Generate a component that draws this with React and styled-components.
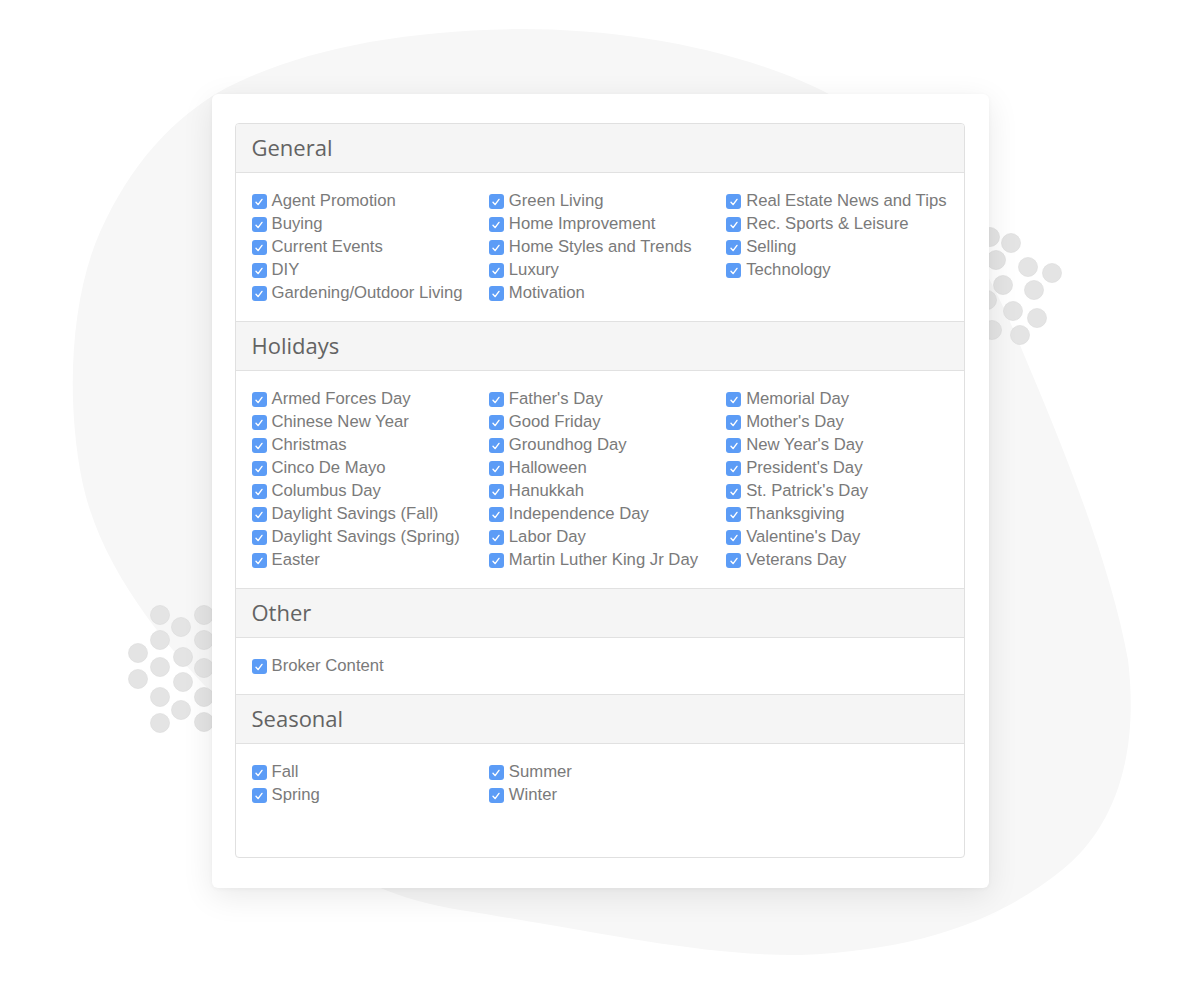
import React from "react"
import styled, { createGlobalStyle } from "styled-components"

const sections = [
  {
    title: "General",
    columns: [
      ["Agent Promotion", "Buying", "Current Events", "DIY", "Gardening/Outdoor Living"],
      ["Green Living", "Home Improvement", "Home Styles and Trends", "Luxury", "Motivation"],
      ["Real Estate News and Tips", "Rec. Sports & Leisure", "Selling", "Technology"],
    ],
  },
  {
    title: "Holidays",
    columns: [
      [
        "Armed Forces Day",
        "Chinese New Year",
        "Christmas",
        "Cinco De Mayo",
        "Columbus Day",
        "Daylight Savings (Fall)",
        "Daylight Savings (Spring)",
        "Easter",
      ],
      [
        "Father's Day",
        "Good Friday",
        "Groundhog Day",
        "Halloween",
        "Hanukkah",
        "Independence Day",
        "Labor Day",
        "Martin Luther King Jr Day",
      ],
      [
        "Memorial Day",
        "Mother's Day",
        "New Year's Day",
        "President's Day",
        "St. Patrick's Day",
        "Thanksgiving",
        "Valentine's Day",
        "Veterans Day",
      ],
    ],
  },
  { title: "Other", columns: [["Broker Content"], [], []] },
  { title: "Seasonal", columns: [["Fall", "Spring"], ["Summer", "Winter"], []] },
]

const rightDots = [
  [990, 237], [1011, 243], [996, 260], [1028, 267], [1052, 273], [1003, 285],
  [1034, 290], [987, 300], [1013, 311], [1037, 318], [992, 330], [1020, 335],
]

const leftDots = [
  [160, 615], [181, 627], [204, 615], [160, 640], [204, 640], [138, 653],
  [160, 667], [183, 657], [204, 668], [138, 679], [183, 682], [160, 697],
  [204, 697], [181, 710], [160, 723], [204, 722],
]

const Backdrop = () => (
  <BackdropSvg viewBox="0 0 1200 981" width="1200" height="981">
    <path
      d="M212 693 C170 650 100 570 82 480 C66 400 70 300 100 232 C130 165 172 118 226 88
         C300 50 400 30 520 29 C640 29 760 55 840 100 C930 160 990 270 1022 350
         C1060 440 1110 560 1128 660 C1140 760 1112 830 1062 870 C1000 920 920 950 800 955
         C700 956 600 932 460 910 C400 900 350 880 300 840 Z"
      fill="#f7f7f7"
    />
    {[...rightDots, ...leftDots].map(([cx, cy], i) => (
      <circle key={i} cx={cx} cy={cy} r="9.5" fill="#e4e4e4" stroke="#dadada" strokeWidth="0.6" />
    ))}
  </BackdropSvg>
)

const CheckBox = () => (
  <Box>
    <svg width="10" height="10" viewBox="0 0 10 10">
      <path d="M2 5.2 L4.1 7.6 L8 2.4" fill="none" stroke="#fff" strokeWidth="1.4" strokeLinecap="round" strokeLinejoin="round" />
    </svg>
  </Box>
)

const App = () => {
  return (
    <>
      <GlobalStyle />
      <Page>
        <Backdrop />
        <Card>
          <Panel>
            {sections.map((section, i) => (
              <Section key={section.title} $last={i === sections.length - 1}>
                <Header>{section.title}</Header>
                <Body $last={i === sections.length - 1}>
                  {section.columns.map((col, c) => (
                    <Column key={c}>
                      {col.map((label) => (
                        <Item key={label}>
                          <CheckBox />
                          <Label>{label}</Label>
                        </Item>
                      ))}
                    </Column>
                  ))}
                </Body>
              </Section>
            ))}
          </Panel>
        </Card>
      </Page>
    </>
  )
}

export default App

// Components

const GlobalStyle = createGlobalStyle`
  body {
    margin: 0;
    background: #fff;
    font-family: "Liberation Sans", Arial, sans-serif;
  }
`
const Page = styled.div`
  position: relative;
  width: 1200px;
  height: 981px;
  overflow: hidden;
  display: flex;
  justify-content: center;
  align-items: flex-start;
  padding-top: 94px;
  box-sizing: border-box;
`
const BackdropSvg = styled.svg`
  position: absolute;
  left: 0;
  top: 0;
  z-index: 0;
`
const Card = styled.div`
  position: relative;
  z-index: 1;
  width: 777px;
  height: 794px;
  box-sizing: border-box;
  padding: 29px 24px 30px 23px;
  background: #fff;
  border-radius: 6px;
  box-shadow: 0 8px 32px rgba(0, 0, 0, 0.09), 0 1px 4px rgba(0, 0, 0, 0.04);
  display: flex;
  flex-direction: column;
`
const Panel = styled.div`
  flex: 1;
  display: flex;
  flex-direction: column;
  border: 1px solid #e0e0e0;
  border-radius: 4px;
  overflow: hidden;
`
const Section = styled.section`
  display: flex;
  flex-direction: column;
  flex: ${(p) => (p.$last ? 1 : "none")};
`
const Header = styled.h3`
  margin: 0;
  height: 48px;
  line-height: 47px;
  padding-left: 16px;
  background: #f5f5f5;
  border-bottom: 1px solid #e1e1e1;
  font-family: "Open Sans", "Noto Sans", sans-serif;
  font-size: 22px;
  font-weight: 400;
  color: #636363;
`
const Body = styled.div`
  flex: ${(p) => (p.$last ? 1 : "none")};
  display: grid;
  grid-template-columns: repeat(3, 1fr);
  padding: 16px 0 17px 16px;
  border-bottom: ${(p) => (p.$last ? "none" : "1px solid #e1e1e1")};
`
const Column = styled.div`
  display: flex;
  flex-direction: column;
`
const Item = styled.label`
  display: flex;
  align-items: center;
  gap: 5px;
  height: 23px;
`
const Box = styled.span`
  width: 15px;
  height: 15px;
  margin-top: 2px;
  border-radius: 3px;
  background: #5c9cf6;
  display: flex;
  align-items: center;
  justify-content: center;
  flex: none;
`
const Label = styled.span`
  font-size: 16.7px;
  color: #7a7a7a;
  white-space: nowrap;
`
